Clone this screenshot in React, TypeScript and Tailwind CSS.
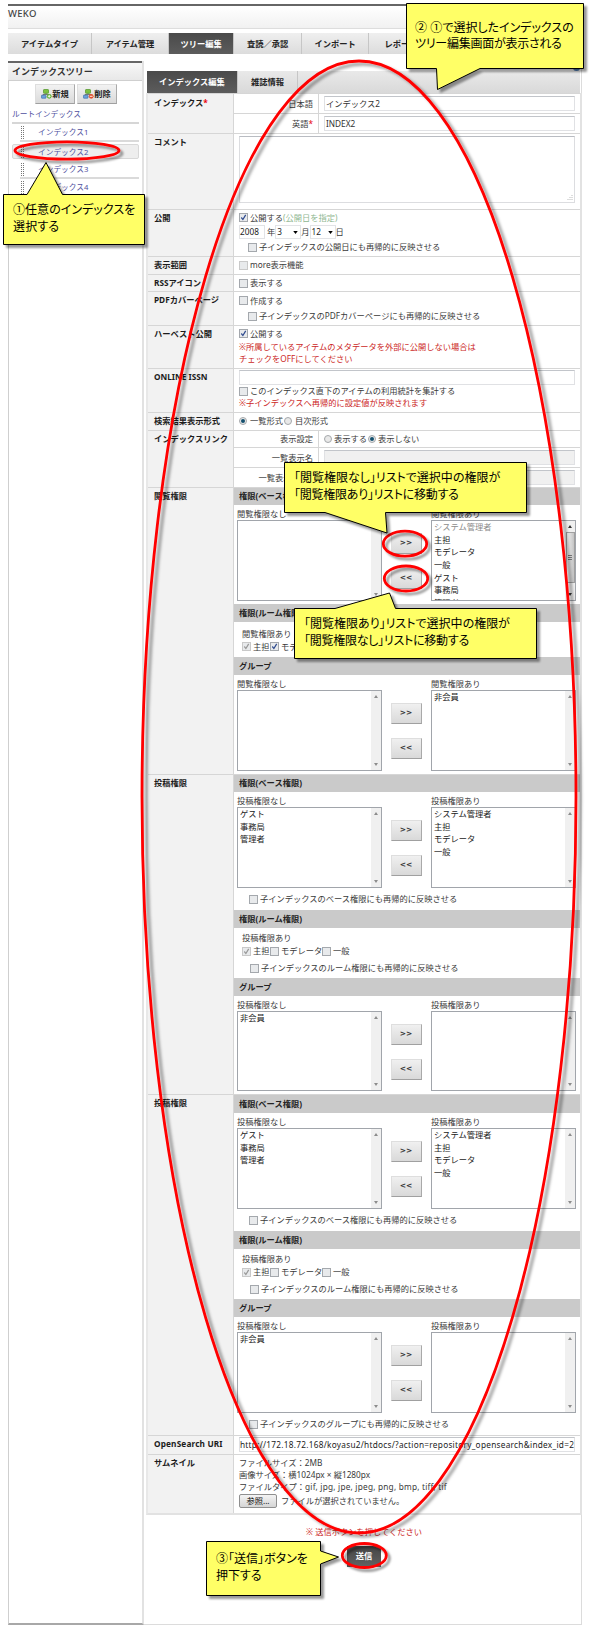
import React, { ReactNode } from 'react';

type Children = { children?: ReactNode };

function Check({ on = false, dim = false }: { on?: boolean; dim?: boolean }) {
  return (
    <span className={'flex h-[9px] w-[9px] shrink-0 items-center justify-center border bg-[#e8eaec] ' + (dim ? 'border-[#c9c9c9]' : 'border-[#a4a8ad]')}>
      {on && (
        <svg viewBox="0 0 8 8" className="h-[7px] w-[7px]">
          <path d="M1.5 4 L3.3 6.3 L6.5 1" fill="none" stroke={dim ? '#999' : '#2f4b8f'} strokeWidth="1.4" />
        </svg>
      )}
    </span>
  );
}

function Radio({ on = false }: { on?: boolean }) {
  return (
    <span className="flex h-[8px] w-[8px] shrink-0 items-center justify-center rounded-full border border-[#a5a8ab] bg-[#e9e9e9]">
      {on && <span className="h-[4px] w-[4px] rounded-full bg-[#14506e]" />}
    </span>
  );
}

function Row({ label, h, children }: Children & { label: ReactNode; h: string }) {
  return (
    <div className={'flex ' + h}>
      <div className="w-[86px] shrink-0 border-t border-r border-[#d6d6d6] bg-[#f2f2f2] pl-[6px] font-bold leading-[15.5px] text-[#1c1c1c]">{label}</div>
      <div className="min-w-0 flex-1 border-t border-[#d6d6d6]">{children}</div>
    </div>
  );
}

function Line({ h, pad = 'pl-[5px]', children }: Children & { h: string; pad?: string }) {
  return <div className={'flex items-center gap-[2px] ' + pad + ' ' + h}>{children}</div>;
}

function SubRow({ label, h, last = false, children }: Children & { label: ReactNode; h: string; last?: boolean }) {
  return (
    <div className={'flex ' + h + (last ? '' : ' border-b border-[#d6d6d6]')}>
      <div className="flex w-[85px] items-center justify-end border-r border-[#d6d6d6] pr-[5px]">{label}</div>
      <div className="flex flex-1 items-center gap-[2px] pr-[5px] pl-[5px]">{children}</div>
    </div>
  );
}

function Field({ off = false, children }: Children & { off?: boolean }) {
  return (
    <div className={'flex h-[15px] flex-1 items-center border border-[#e0e1e4] border-t-[#c2c5ca] pl-px text-[#333] ' + (off ? 'bg-[#f0f0f0]' : 'bg-white')}>
      {children}
    </div>
  );
}

function Band({ children, h = 'h-[18px]' }: Children & { h?: string }) {
  return <div className={'flex items-center bg-[#cacaca] pb-px pl-[5px] font-bold text-[#222] ' + h}>{children}</div>;
}

function List({ items, h, dimFirst = false, active = false }: { items: string[]; h: string; dimFirst?: boolean; active?: boolean }) {
  const arrow = active ? '#333' : '#8c8c8c';
  return (
    <div className={'flex w-[145px] overflow-hidden border border-[#a1a5ab] bg-white ' + h}>
      <div className="flex-1 pl-[2px]">
        {items.map((it, i) => (
          <div key={it} className={'h-[12.7px] leading-[12.7px] ' + (dimFirst && i === 0 ? 'text-[#8b8b8b]' : 'text-[#222]')}>{it}</div>
        ))}
      </div>
      <div className="flex w-[10px] flex-col items-center justify-between bg-[#f0f0f0] py-[4px]">
        <svg viewBox="0 0 4 3" className="h-[3px] w-[4px] shrink-0"><path d="M0 3 L2 0 L4 3Z" fill={arrow} /></svg>
        {active && (
          <div className="mt-[4px] mb-auto flex h-[51px] w-[9px] flex-col items-center justify-center gap-px border border-[#a0a0a0] bg-linear-to-r from-[#f1f1f1] to-[#c4c4c4]">
            <span className="h-px w-[4px] bg-[#777]" />
            <span className="h-px w-[4px] bg-[#777]" />
            <span className="h-px w-[4px] bg-[#777]" />
          </div>
        )}
        <svg viewBox="0 0 4 3" className="h-[3px] w-[4px] shrink-0"><path d="M0 0 L2 3 L4 0Z" fill={arrow} /></svg>
      </div>
    </div>
  );
}

function Move({ children }: Children) {
  return (
    <div className="flex h-[21px] w-[31px] items-center justify-center border border-[#dedede] border-r-[#a9a9a9] border-b-[#a0a0a0] bg-linear-to-b from-[#f0f0f0] to-[#d9d9d9] pb-px font-['DejaVu_Sans'] text-[7.5px] font-bold text-[#333]">
      {children}
    </div>
  );
}

type DualProps = {
  kind: string;
  left: string[];
  right: string[];
  h: string;
  top?: string;
  listH?: string;
  dimFirst?: boolean;
  child?: string;
};

function Dual({ kind, left, right, h, top = 'pt-[3px]', listH = 'h-[81px]', dimFirst = false, child }: DualProps) {
  return (
    <div className={'pl-[3px] ' + h + ' ' + top}>
      <div className="flex">
        <div className="w-[145px]">
          <div className="h-[12px] leading-[11px]">{kind}なし</div>
          <List items={left} h={listH} />
        </div>
        <div className="flex w-[49px] flex-col items-center gap-[14px] pt-[25px] pr-[1px]">
          <Move>&gt;&gt;</Move>
          <Move>&lt;&lt;</Move>
        </div>
        <div className="w-[145px]">
          <div className="h-[12px] leading-[11px]">{kind}あり</div>
          <List items={right} h={listH} dimFirst={dimFirst} active={dimFirst} />
        </div>
      </div>
      {child && <Line h="h-[22px]" pad="pl-[12px]"><Check />{child}</Line>}
    </div>
  );
}

function RoomPost() {
  return (
    <div className="h-[50px] pt-[4px]">
      <Line h="h-[12px]" pad="pl-[8px]">投稿権限あり</Line>
      <Line h="h-[14px]" pad="pl-[8px]">
        <Check on dim /><span className="w-[15px] whitespace-nowrap">主担</span>
        <Check /><span className="w-[39px] whitespace-nowrap">モデレータ</span>
        <Check />一般
      </Line>
      <Line h="h-[20px]" pad="pl-[16px]"><Check />子インデックスのルーム権限にも再帰的に反映させる</Line>
    </div>
  );
}

function TopTab({ w, active = false, children }: Children & { w: string; active?: boolean }) {
  return (
    <div className={'flex h-full shrink-0 items-center justify-center border-r border-[#c6c6c6] font-bold whitespace-nowrap ' + w + ' ' + (active ? 'bg-linear-to-b from-[#4a4a4a] to-[#5c5c5c] text-white' : 'text-[#222]')}>
      {children}
    </div>
  );
}

function TreeIcon({ remove = false }: { remove?: boolean }) {
  return (
    <svg viewBox="0 0 11 10" className="h-[10px] w-[11px]">
      <path d="M5 4v2M2 7V5.5h6V7" stroke="#777" strokeWidth="1" fill="none" />
      <rect x="2.5" y="0.5" width="5" height="3.8" rx=".6" fill="#7cc23f" stroke="#4f9427" strokeWidth=".7" />
      <rect x="0.4" y="6.2" width="4.6" height="3" rx=".5" fill="#6ea3dd" stroke="#3c6fae" strokeWidth=".7" />
      <circle cx="8.2" cy="7.3" r="2.4" fill={remove ? '#e2502f' : '#5fb234'} />
      <path d={remove ? 'M6.8 7.3h2.8' : 'M6.8 7.3h2.8M8.2 5.9v2.8'} stroke="#fff" strokeWidth=".9" />
    </svg>
  );
}

function TreeButton({ remove = false, w, children }: Children & { remove?: boolean; w: string }) {
  return (
    <div className={'flex h-[20px] items-center justify-center border border-[#dedede] border-r-[#aaa] border-b-[#a0a0a0] bg-linear-to-b from-[#f2f2f2] to-[#dadada] font-bold text-[#222] ' + w}>
      <TreeIcon remove={remove} />{children}
    </div>
  );
}

function Handle() {
  return (
    <svg viewBox="0 0 3 13" className="mr-[14px] h-[13px] w-[3px]">
      <path d="M.5 0v13M2.5 0v13" stroke="#777" strokeWidth="1" strokeDasharray="1 1" />
    </svg>
  );
}

function TreeItem({ selected = false, children }: Children & { selected?: boolean }) {
  if (selected) {
    return (
      <div className="my-[2px] flex h-[15px] items-center rounded-[2px] border border-[#d8d8d8] bg-[#eeeeee] pl-[8px]">
        <Handle />{children}
      </div>
    );
  }
  return (
    <div className="ml-[8px] flex h-[18px] items-center border-b-2 border-[#dadada] pl-px">
      <Handle />{children}
    </div>
  );
}

const GUESTS = ['ゲスト', '事務局', '管理者'];
const STAFF = ['システム管理者', '主担', 'モデレータ', '一般'];

function Sidebar() {
  return (
    <div className="h-[1564px] w-[136px] shrink-0 border-r-2 border-b-2 border-l border-[#e2e2e2] border-b-[#a8a8a8] border-l-[#cfcfcf]">
      <div className="-ml-px flex h-[20px] items-center border-t-2 border-b border-[#666] border-b-[#cfcfcf] bg-linear-to-b from-[#f7f7f7] to-[#e8e8e8] pl-[4px] text-[9px] font-bold text-[#333]">インデックスツリー</div>
      <div className="flex gap-[2px] pt-[3px] pl-[26px]">
        <TreeButton w="w-[40px]">新規</TreeButton>
        <TreeButton w="w-[40px]" remove>削除</TreeButton>
      </div>
      <div className="px-[3px] text-[7.7px] text-[#5050a0]">
        <div className="flex h-[20px] items-center border-b-2 border-[#d6d6d6] pt-px">ルートインデックス</div>
        <TreeItem>インデックス1</TreeItem>
        <TreeItem selected>インデックス2</TreeItem>
        <TreeItem>インデックス3</TreeItem>
        <TreeItem>インデックス4</TreeItem>
      </div>
    </div>
  );
}

function Form() {
  return (
    <div className="ml-[2px] w-[436px]">
      <div className="mr-[2px] ml-px flex h-[22px] bg-linear-to-b from-[#e9e9e9] to-[#d9d9d9]">
        <TopTab w="w-[91px]" active>インデックス編集</TopTab>
        <TopTab w="w-[60px]">雑誌情報</TopTab>
      </div>
      <div className="border-2 border-t-0 border-[#e2e2e2] border-l-[#e8e8e8]">
        <Row h="h-[40px]" label={<span className="relative top-px">インデックス<span className="text-red-600">*</span></span>}>
          <SubRow h="h-[20px]" label="日本語"><Field>インデックス2</Field></SubRow>
          <SubRow h="h-[19px]" last label={<>英語<span className="text-red-600">*</span></>}><Field>INDEX2</Field></SubRow>
        </Row>
        <Row h="h-[76px]" label="コメント">
          <div className="mt-[2px] mr-[5px] ml-[5px] flex h-[67px] items-end justify-end border border-[#dcdde0] border-t-[#b9bcc2]">
            <svg viewBox="0 0 6 6" className="m-px h-[6px] w-[6px]"><path d="M5 0v6M3 2v4M1 4v2" stroke="#bbb" strokeDasharray="1 1" /></svg>
          </div>
        </Row>
        <Row h="h-[47px]" label="公開">
          <Line h="h-[15px]"><Check on />公開する<span className="-ml-[2px] text-[#8fb791]">(公開日を指定)</span></Line>
          <Line h="h-[14px]">
            <span className="flex h-[14px] w-[26px] items-center border border-[#e2e3e6] text-[#222]">2008</span>年
            <span className="-ml-[2px] flex h-[14px] w-[26px] items-center justify-between border border-[#e2e3e6] px-px text-[#222]">3<svg viewBox="0 0 6 4" className="mr-px h-[3px] w-[5px]"><path d="M0 0h6L3 4Z" /></svg></span>
            <span className="-ml-[2px]">月</span>
            <span className="-ml-[2px] flex h-[14px] w-[26px] items-center justify-between border border-[#e2e3e6] px-px text-[#222]">12<svg viewBox="0 0 6 4" className="mr-px h-[3px] w-[5px]"><path d="M0 0h6L3 4Z" /></svg></span>
            <span className="-ml-[2px]">日</span>
          </Line>
          <Line h="h-[16px]" pad="pl-[14px]"><Check />子インデックスの公開日にも再帰的に反映させる</Line>
        </Row>
        <Row h="h-[18px]" label="表示範囲"><Line h="h-[16px]"><Check dim />more表示機能</Line></Row>
        <Row h="h-[17px]" label="RSSアイコン"><Line h="h-[16px]"><Check />表示する</Line></Row>
        <Row h="h-[34px]" label="PDFカバーページ">
          <Line h="h-[17px]"><Check />作成する</Line>
          <Line h="h-[14px]" pad="pl-[14px]"><Check />子インデックスのPDFカバーページにも再帰的に反映させる</Line>
        </Row>
        <Row h="h-[43px]" label="ハーベスト公開">
          <Line h="h-[15px]"><Check on />公開する</Line>
          <div className="pl-[5px] leading-[12px] text-[#cc1f26]">※所属しているアイテムのメタデータを外部に公開しない場合は<br />チェックをOFFにしてください</div>
        </Row>
        <Row h="h-[44px]" label="ONLINE ISSN">
          <div className="flex pt-px pr-[5px] pl-[5px]"><Field /></div>
          <Line h="h-[12px]"><Check />このインデックス直下のアイテムの利用統計を集計する</Line>
          <div className="pl-[5px] leading-[11px] text-[#cc1f26]">※子インデックスへ再帰的に設定値が反映されます</div>
        </Row>
        <Row h="h-[18px]" label="検索結果表示形式">
          <Line h="h-[16px]"><Radio on /><span className="w-[33px] pl-px whitespace-nowrap">一覧形式</span><Radio /><span className="pl-px">目次形式</span></Line>
        </Row>
        <Row h="h-[57px]" label="インデックスリンク">
          <SubRow h="h-[17px]" label="表示設定"><Radio /><span className="w-[32px] whitespace-nowrap">表示する</span><Radio on />表示しない</SubRow>
          <SubRow h="h-[20px]" label="一覧表示名"><Field off /></SubRow>
          <SubRow h="h-[19px]" last label="一覧表示名(英)"><Field off /></SubRow>
        </Row>
        <Row h="h-[287px]" label="閲覧権限">
          <Band h="h-[17px]">権限(ベース権限)</Band>
          <Dual kind="閲覧権限" left={[]} right={[...STAFF, 'ゲスト', '事務局', '管理者']} h="h-[99px]" dimFirst />
          <Band>権限(ルーム権限)</Band>
          <div className="h-[35px] pt-[6px]">
            <Line h="h-[12px]" pad="pl-[8px]">閲覧権限あり</Line>
            <Line h="h-[13px]" pad="pl-[8px]"><Check on dim /><span className="w-[15px] whitespace-nowrap">主担</span><Check on />モデレータ</Line>
          </div>
          <Band>グループ</Band>
          <Dual kind="閲覧権限" left={[]} right={['非会員']} h="h-[99px]" />
        </Row>
        <Row h="h-[320px]" label="投稿権限">
          <Band h="h-[17px]">権限(ベース権限)</Band>
          <Dual kind="投稿権限" left={GUESTS} right={STAFF} h="h-[118px]" child="子インデックスのベース権限にも再帰的に反映させる" />
          <Band>権限(ルーム権限)</Band>
          <RoomPost />
          <Band>グループ</Band>
          <Dual kind="投稿権限" left={['非会員']} right={[]} h="h-[98px]" listH="h-[80px]" />
        </Row>
        <Row h="h-[341px]" label="投稿権限">
          <Band>権限(ベース権限)</Band>
          <Dual kind="投稿権限" left={GUESTS} right={STAFF} h="h-[118px]" child="子インデックスのベース権限にも再帰的に反映させる" />
          <Band>権限(ルーム権限)</Band>
          <RoomPost />
          <Band>グループ</Band>
          <Dual kind="投稿権限" left={['非会員']} right={[]} h="h-[118px]" child="子インデックスのグループにも再帰的に反映させる" />
        </Row>
        <Row h="h-[19px]" label={<span className="tracking-[0.15px]">OpenSearch URI</span>}>
          <div className="flex pt-px pr-[5px] pl-[5px]">
            <div className="h-[15px] w-full overflow-hidden border border-[#e0e1e4] border-t-[#c2c5ca] leading-[13px] tracking-[0.27px] whitespace-nowrap text-[#222]">http://172.18.72.168/koyasu2/htdocs/?action=repository_opensearch&amp;index_id=2</div>
          </div>
        </Row>
        <Row h="h-[59px]" label="サムネイル">
          <div className="pt-[2px] pl-[5px] leading-[12px]">
            ファイルサイズ：2MB<br />画像サイズ：横1024px × 縦1280px<br />ファイルタイプ：<span className="tracking-[0.22px]">gif, jpg, jpe, jpeg, png, bmp, tiff, tif</span>
          </div>
          <Line h="h-[16px]">
            <span className="mr-[2px] flex h-[14px] w-[38px] items-center justify-center rounded-[2px] border border-[#8f8f8f] bg-linear-to-b from-[#f4f4f4] to-[#d5d5d5] text-[#111]">参照...</span>
            ファイルが選択されていません。
          </Line>
        </Row>
      </div>
      <div className="pt-[10px] text-center leading-[14px] text-[#cc1f26]">※ 送信ボタンを押してください</div>
      <div className="mx-auto mt-[7px] flex h-[21px] w-[34px] items-center justify-center bg-linear-to-b from-[#444] to-[#626262] pb-[2px] font-bold text-white">送信</div>
    </div>
  );
}

function Callout({ box, children }: Children & { box: string }) {
  return <div className={"absolute font-['Liberation_Sans','Noto_Sans_CJK_JP',sans-serif] text-[12px] leading-[16.5px] whitespace-nowrap text-black [font-feature-settings:'palt'] " + box}>{children}</div>;
}

function Overlay() {
  return (
    <>
      <svg viewBox="0 0 593 1628" className="absolute top-0 left-0 h-[1628px] w-[593px]">
        <defs>
          <filter id="soft" x="-20%" y="-20%" width="150%" height="150%">
            <feDropShadow dx="3" dy="3" stdDeviation="1.3" floodColor="#000" floodOpacity=".4" />
          </filter>
          <filter id="wide" filterUnits="userSpaceOnUse" x="0" y="0" width="593" height="1628">
            <feDropShadow dx="4" dy="3" stdDeviation="1.5" floodColor="#000" floodOpacity=".4" />
          </filter>
        </defs>
        <ellipse cx="359" cy="797" rx="217" ry="736" fill="none" stroke="#f00" strokeWidth="2.8" filter="url(#wide)" />
        <g fill="none" stroke="#f00" strokeWidth="2.8">
          <ellipse cx="67" cy="150.5" rx="52" ry="8.7" filter="url(#soft)" />
          <ellipse cx="405" cy="543.7" rx="21.7" ry="12.5" filter="url(#soft)" />
          <ellipse cx="406" cy="578.5" rx="21.7" ry="12.5" filter="url(#soft)" />
          <ellipse cx="364.3" cy="1555.5" rx="22" ry="12" filter="url(#soft)" />
        </g>
        <g fill="#ffff66" stroke="#000" strokeWidth="1">
          <path d="M3.5 194.5H27L46 162.5L62.5 194.5H144.5V244.5H3.5Z" filter="url(#soft)" />
          <path d="M406.5 3.5H583.5V68.5H480L437.5 89.5L436.5 68.5H406.5Z" filter="url(#soft)" />
          <path d="M284.5 462.5H526.5V512.5H385.5L387 533L325 512.5H284.5Z" filter="url(#soft)" />
          <path d="M294.5 608.5H335L389.5 593L395.5 608.5H536.5V658.5H294.5Z" filter="url(#soft)" />
          <path d="M206.5 1541.5H320.5V1551L338.5 1557L320.5 1564V1595.5H206.5Z" filter="url(#soft)" />
        </g>
      </svg>
      <Callout box="top-[202px] left-[13px]"><span className="tracking-[0.05px]">①任意のインデックスを</span><br /><span className="tracking-[0.15px]">選択する</span></Callout>
      <Callout box="top-[19.5px] left-[415px]">② ①で選択したインデックスの<br /><span className="tracking-[-0.25px]">ツリー編集画面が表示される</span></Callout>
      <Callout box="top-[470px] left-[294px]">「閲覧権限なし」リストで選択中の権限が<br /><span className="tracking-[-0.25px]">「閲覧権限あり」リストに移動する</span></Callout>
      <Callout box="top-[616px] left-[304px]">「閲覧権限あり」リストで選択中の権限が<br /><span className="tracking-[-0.25px]">「閲覧権限なし」リストに移動する</span></Callout>
      <Callout box="top-[1551px] left-[216px]">③「送信」ボタンを<br />押下する</Callout>
    </>
  );
}

export default function App() {
  return (
    <div lang="ja" className="relative h-[1628px] w-[593px] overflow-hidden bg-white pt-[4px] pl-[8px] font-['Noto_Sans','Noto_Sans_CJK_JP',sans-serif] text-[8.25px] leading-[12px] text-[#3a3a3a]">
      <div className="h-[25px] w-[574px] border-t-2 border-b border-[#666] border-b-[#ddd] bg-linear-to-b from-white to-[#f1f1f1] pt-[2px] text-[9.5px] font-medium tracking-[0.3px] text-[#444]">WEKO</div>
      <div className="mt-[4px] flex h-[21px] w-[574px] overflow-hidden bg-linear-to-b from-[#efefef] to-[#dcdcdc]">
        <TopTab w="w-[84px]">アイテムタイプ</TopTab>
        <TopTab w="w-[77px]">アイテム管理</TopTab>
        <TopTab w="w-[65px]" active>ツリー編集</TopTab>
        <TopTab w="w-[68px]">査読／承認</TopTab>
        <TopTab w="w-[67px]">インポート</TopTab>
        <TopTab w="w-[65px]">レポート</TopTab>
      </div>
      <div className="mt-[7px] flex h-[1564px]">
        <Sidebar />
        <div className="relative w-[438px] border-r border-b border-[#dcdcdc] pt-[10px]">
          <span className="absolute top-[3px] right-[1px] h-[7px] w-[7px] rounded-full bg-[#4f7fb8]" />
          <Form />
        </div>
      </div>
      <Overlay />
    </div>
  );
}
